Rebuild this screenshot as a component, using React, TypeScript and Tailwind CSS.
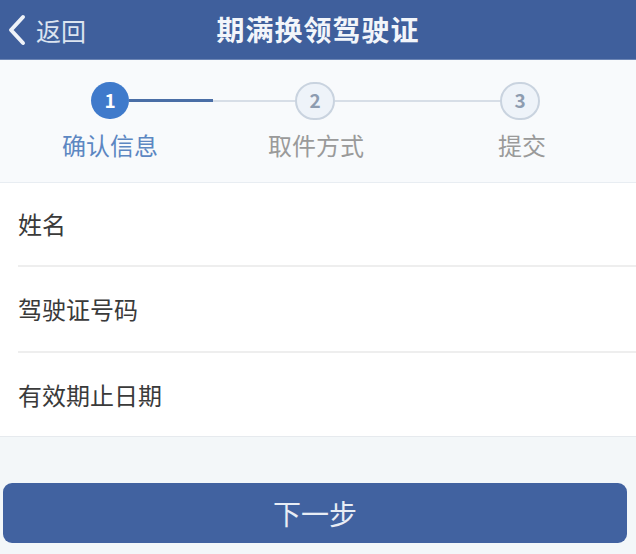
import React from "react";

const font = { fontFamily: '"Noto Sans CJK SC", "Noto Sans", sans-serif' };

function Circle({ n, active }: { n: number; active?: boolean }) {
  if (active) {
    return (
      <div className="w-[38px] h-[37px] rounded-full bg-[#3f7acb] flex items-center justify-center text-white text-[19px] font-bold shrink-0">
        {n}
      </div>
    );
  }
  return (
    <div className="w-[40px] h-[38px] rounded-full border-2 border-[#c9d3df] bg-[#eef3f9] flex items-center justify-center text-[#8d9cb0] text-[19px] font-bold shrink-0">
      {n}
    </div>
  );
}

export default function App() {
  return (
    <div className="w-[636px] h-[554px] bg-[#f3f7f9] flex flex-col overflow-hidden" style={font}>
      <div className="h-[60px] bg-[#3f5f9c] flex items-center relative border-b border-[#6d86b5]">
        <div className="flex items-center pl-[6px] pt-[1px]">
          <svg width="22" height="32" viewBox="0 0 22 32" className="shrink-0">
            <path d="M17 3 L5 16 L17 29" fill="none" stroke="#eef2f8" strokeWidth="4" strokeLinecap="round" strokeLinejoin="round" />
          </svg>
          <span className="ml-[8px] text-[25px] text-[#dce4f0] leading-none">返回</span>
        </div>
        <div className="absolute left-0 right-0 top-0 h-[58px] flex items-center justify-center pointer-events-none">
          <span className="text-[28px] font-bold text-[#f2f5fa] leading-none tracking-[1px]">期满换领驾驶证</span>
        </div>
      </div>

      <div className="h-[123px] bg-[#f8fafc] border-b border-[#e8edf2] flex flex-col">
        <div className="flex items-center pl-[91px] pt-[22px] h-[59px]">
          <Circle n={1} active />
          <div className="w-[84px] h-[3px] bg-[#4a6ea6]" />
          <div className="w-[82px] h-[2px] bg-[#d7dee7]" />
          <Circle n={2} />
          <div className="w-[165px] h-[2px] bg-[#d7dee7]" />
          <Circle n={3} />
        </div>
        <div className="flex pl-[7px] mt-[14px]">
          <div className="w-[206px] text-center text-[24px] text-[#5c87c2] leading-none">确认信息</div>
          <div className="w-[206px] text-center text-[24px] text-[#9a9a9a] leading-none">取件方式</div>
          <div className="w-[206px] text-center text-[24px] text-[#9a9a9a] leading-none">提交</div>
        </div>
      </div>

      <div className="bg-white border-b border-[#e6eaee]">
        <div className="h-[82px] flex items-center pl-[18px] text-[24px] text-[#3a3a3a]">
          <span>姓名</span>
        </div>
        <div className="ml-[18px] h-[2px] bg-[#eeeeee]" />
        <div className="h-[84px] flex items-center pl-[18px] text-[24px] text-[#3a3a3a]">
          <span>驾驶证号码</span>
        </div>
        <div className="ml-[18px] h-[2px] bg-[#eeeeee]" />
        <div className="h-[83px] flex items-center pl-[18px] text-[24px] text-[#3a3a3a]">
          <span>有效期止日期</span>
        </div>
      </div>

      <div className="px-[3px] pr-[9px] pt-[46px]">
        <div className="h-[60px] rounded-[9px] bg-[#4162a0] flex items-center justify-center">
          <span className="text-[28px] text-[#e8edf5] leading-none">下一步</span>
        </div>
      </div>
    </div>
  );
}
